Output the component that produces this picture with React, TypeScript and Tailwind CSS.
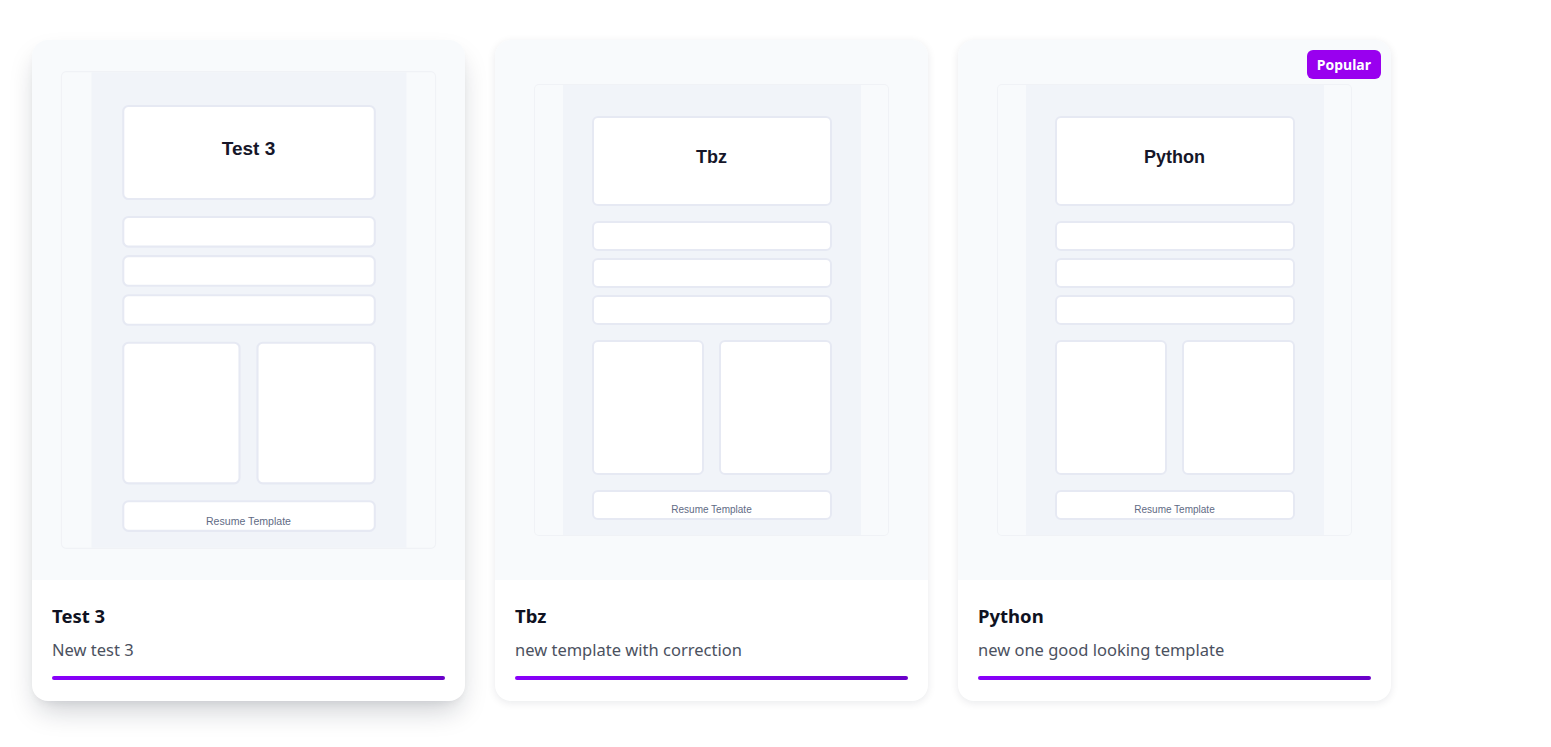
import React from 'react'

const templates = [
  { id: 1, name: 'Test 3', description: 'New test 3', popular: false, active: true },
  { id: 2, name: 'Tbz', description: 'new template with correction', popular: false, active: false },
  { id: 3, name: 'Python', description: 'new one good looking template', popular: true, active: false },
]

function ResumePreview({ title }: { title: string }) {
  const box = 'rounded-md border-2 border-[#e6e9f3] bg-white'
  return (
    <div className="flex h-[450px] w-[353px] justify-center rounded bg-[#f8fafc] ring-1 ring-[#f0f2f6]">
      <div className="flex h-full w-[298px] flex-col bg-[#f1f4f9] px-[29px] pt-[31px] pb-[15px] font-['Liberation_Sans',sans-serif]">
        <div className={`${box} h-[90px] pt-[25px] text-center text-lg font-bold text-[#161629]`}>{title}</div>
        <div className={`${box} mt-[15px] h-[30px]`} />
        <div className={`${box} mt-[7px] h-[30px]`} />
        <div className={`${box} mt-[7px] h-[30px]`} />
        <div className="mt-[15px] grid h-[135px] grid-cols-2 gap-[15px]">
          <div className={box} />
          <div className={box} />
        </div>
        <div className={`${box} mt-[15px] h-[30px] pt-[11px] text-center text-[10px] leading-[14px] text-[#5f6b85]`}>
          Resume Template
        </div>
      </div>
    </div>
  )
}

export default function App() {
  return (
    <div className="min-h-screen bg-white pt-10 pl-8 font-['Noto_Sans',sans-serif]">
      <div className="flex gap-[30px]">
        {templates.map(t => (
          <div
            key={t.id}
            className={`relative flex w-[433px] flex-col overflow-hidden rounded-2xl bg-white ${
              t.active
                ? 'shadow-[0_14px_28px_-6px_rgba(15,23,42,0.22),0_4px_10px_-4px_rgba(15,23,42,0.08)]'
                : 'shadow-[0_2px_8px_rgba(15,23,42,0.09)]'
            }`}
          >
            <div className="flex h-[540px] items-center justify-center bg-[#f8fafc]">
              <div className={t.active ? 'scale-[1.057]' : ''}>
                <ResumePreview title={t.name} />
              </div>
            </div>
            {t.popular && (
              <span className="absolute top-[10px] right-[10px] rounded-md bg-[#9900ef] px-[10px] py-[4px] text-sm leading-[21px] font-bold text-white">
                Popular
              </span>
            )}
            <div className="px-5 pt-[22px] pb-[21px]">
              <h3 className="text-[18.5px] leading-7 font-bold text-[#0f1222]">{t.name}</h3>
              <p className="mt-2 text-[16.5px] leading-6 text-[#4b5160]">{t.description}</p>
              <div className="mt-3.5 h-1 rounded-full bg-gradient-to-r from-[#8800fa] to-[#6a00c9]" />
            </div>
          </div>
        ))}
      </div>
    </div>
  )
}
